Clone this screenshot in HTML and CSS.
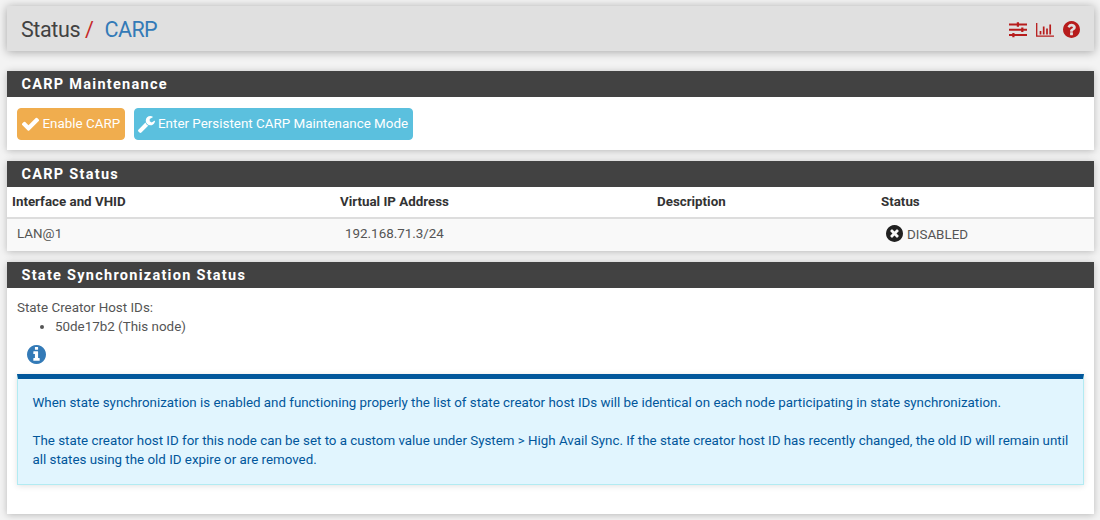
FILE: index.html
```html
<!DOCTYPE html>
<html lang="en">
<head>
<meta charset="utf-8">
<title>Status: CARP</title>
<link rel="stylesheet" href="styles.css">
</head>
<body>
<header class="page-header">
  <h1 class="crumbs"><span class="crumb">Status</span><span class="slash">/</span><a class="crumb-link">CARP</a></h1>
  <nav class="tools">
    <svg class="tool-sliders" viewBox="0 0 18 16"><path d="M0 2.500h18M0 7.800h18M0 13.100h18" stroke="currentColor" stroke-width="2"/><path d="M8.900 .3v4.400M13.300 5.600v4.400M4.400 10.900v4.400" stroke="currentColor" stroke-width="2.200"/></svg>
    <svg class="tool-chart" viewBox="0 0 18 14"><path d="M.7 0v13.100h17.300" fill="none" stroke="currentColor" stroke-width="1.300"/><path d="M4.500 11.500V8M7.700 11.500V3.500M11 11.500V5.500M14.200 11.500V1.500" stroke="currentColor" stroke-width="1.700"/></svg>
    <svg class="tool-help" viewBox="128 128 1536 1536"><path fill="currentColor" fill-rule="evenodd" d="M1024 1376v-192q0-14-9-23t-23-9h-192q-14 0-23 9t-9 23v192q0 14 9 23t23 9h192q14 0 23-9t9-23zm256-672q0-88-55.500-163t-138.500-116-170-41q-243 0-371 213-15 24 8 42l132 100q7 6 19 6 16 0 25-12 53-68 86-92 34-24 86-24 48 0 85.500 26t37.500 59q0 38-20 61t-68 45q-63 28-115.500 86.500t-52.500 125.500v36q0 14 9 23t23 9h192q14 0 23-9t9-23q0-19 21.500-49.500t54.500-49.500q32-18 49-28.500t46-35 44.500-48 28-60.500 12.500-81zm384 192q0 209-103 385.500t-279.500 279.500-385.500 103-385.500-103-279.500-279.500-103-385.500 103-385.500 279.500-279.500 385.500-103 385.500 103 279.500 279.500 103 385.500z"/></svg>
  </nav>
</header>

<section class="panel maintenance">
  <h2 class="panel-heading">CARP Maintenance</h2>
  <div class="actions">
    <button class="btn btn-warning"><svg class="btn-icon" viewBox="128 250 1536 1400"><path fill="currentColor" d="M1671 566q0 40-28 68l-724 724-136 136q-28 28-68 28t-68-28l-136-136-362-362q-28-28-28-68t28-68l136-136q28-28 68-28t68 28l294 295 656-657q28-28 68-28t68 28l136 136q28 28 28 68z"/></svg><span>Enable CARP</span></button>
    <button class="btn btn-info"><svg class="btn-icon" viewBox="85 128 1641 1643"><path fill="currentColor" d="M1092 1052l-682 682q-37 37-90 37-52 0-91-37l-106-108q-38-36-38-90 0-53 38-91l681-681q39 98 114.500 173.500t173.500 114.500zm634-435q0 39-23 106-47 134-164.500 217.500t-258.500 83.500q-185 0-316.500-131.500t-131.500-316.500 131.500-316.500 316.500-131.500q58 0 121.500 16.500t107.500 46.500q16 11 16 28t-16 28l-293 169v224l193 107q5-3 79-48.500t135.500-81 70.500-35.500q15 0 23.500 10t8.500 25z"/></svg><span>Enter Persistent CARP Maintenance Mode</span></button>
  </div>
</section>

<section class="panel status">
  <h2 class="panel-heading">CARP Status</h2>
  <table class="carp-table">
    <thead><tr><th class="col-if">Interface and VHID</th><th class="col-ip">Virtual IP Address</th><th class="col-desc">Description</th><th>Status</th></tr></thead>
    <tbody><tr><td>LAN@1</td><td>192.168.71.3/24</td><td></td><td><div class="state"><svg class="state-icon" viewBox="128 128 1536 1536"><path fill="currentColor" fill-rule="evenodd" d="M1277 1122q0-26-19-45l-181-181 181-181q19-19 19-45 0-27-19-46l-90-90q-19-19-46-19-26 0-45 19l-181 181-181-181q-19-19-45-19-27 0-46 19l-90 90q-19 19-19 46 0 26 19 45l181 181-181 181q-19 19-19 45 0 27 19 46l90 90q19 19 46 19 26 0 45-19l181-181 181 181q19 19 45 19 27 0 46-19l90-90q19-19 19-46zm387-226q0 209-103 385.500t-279.500 279.500-385.500 103-385.500-103-279.500-279.500-103-385.500 103-385.500 279.500-279.500 385.500-103 385.500 103 279.500 279.500 103 385.500z"/></svg><span class="state-text">DISABLED</span></div></td></tr></tbody>
  </table>
</section>

<section class="panel sync">
  <h2 class="panel-heading">State Synchronization Status</h2>
  <div class="sync-body">
    <div class="ids-label">State Creator Host IDs:</div>
    <ul class="ids"><li>50de17b2 (This node)</li></ul>
    <svg class="info-icon" viewBox="128 128 1536 1536"><path fill="currentColor" fill-rule="evenodd" d="M1152 1376v-160q0-14-9-23t-23-9h-96v-512q0-14-9-23t-23-9h-320q-14 0-23 9t-9 23v160q0 14 9 23t23 9h96v320h-96q-14 0-23 9t-9 23v160q0 14 9 23t23 9h448q14 0 23-9t9-23zm-128-896v-160q0-14-9-23t-23-9h-192q-14 0-23 9t-9 23v160q0 14 9 23t23 9h192q14 0 23-9t9-23zm640 416q0 209-103 385.500t-279.500 279.500-385.500 103-385.500-103-279.500-279.500-103-385.500 103-385.500 279.500-279.500 385.500-103 385.500 103 279.500 279.500 103 385.500z"/></svg>
    <div class="note">
      <p class="note-first">When state synchronization is enabled and functioning properly the list of state creator host IDs will be identical on each node participating in state synchronization.</p>
      <p class="note-second">The state creator host ID for this node can be set to a custom value under System &gt; High Avail Sync. If the state creator host ID has recently changed, the old ID will remain until<br>all states using the old ID expire or are removed.</p>
    </div>
  </div>
</section>
</body>
</html>
```
FILE: styles.css
```css
* { box-sizing: border-box; }
html { height: 520px; overflow: hidden; }
body { margin: 0; height: 520px; padding: 6px 6px 0 7px; overflow: hidden; background: #f3f3f3; color: #555; font: 13.400px/19px Roboto, sans-serif; }
h1, h2, p, ul { margin: 0; padding: 0; font-weight: 400; }
svg { display: block; flex: none; }

.page-header { display: flex; align-items: center; justify-content: space-between; height: 45px; padding: 0 14px; background: #e0e0e0; box-shadow: 0 1px 9px rgba(0,0,0,.32); }
.crumbs { display: flex; padding-top: 2px; font-size: 21.500px; line-height: 30px; letter-spacing: -.4px; color: #424242; }
.slash { margin-left: 5px; color: #c62828; }
.crumb-link { margin-left: 11px; color: #337ab7; letter-spacing: -.6px; }
.tools { display: flex; align-items: center; color: #b71c1c; padding-top: 2px; }
.tool-sliders { width: 18px; height: 16px; }
.tool-chart { width: 18px; height: 14px; margin-left: 9px; }
.tool-help { width: 17px; height: 17px; margin-left: 9px; }

.panel { background: #fff; box-shadow: 0 1px 7px rgba(0,0,0,.24); }
.maintenance { height: 79px; margin-top: 20px; }
.status { height: 90px; margin-top: 11px; }
.sync { height: 252px; margin-top: 11px; }
.panel-heading { height: 26px; padding: 1px 0 0 14.500px; background: #424242; color: #fff; font-size: 14.500px; line-height: 26px; font-weight: 700; letter-spacing: 1.270px; }

.actions { display: flex; gap: 8.500px; padding: 11px 10px; }
.btn { display: flex; align-items: center; gap: 3.500px; height: 32px; padding: 0 4px; border: 1px solid; border-radius: 4px; color: #fff; font: 13.400px/30px Roboto, sans-serif; white-space: nowrap; }
.btn-warning { width: 108px; background: #f0ad4e; border-color: #f0ad4e; }
.btn-info { width: 279.500px; padding-left: 3px; background: #5bc0de; border-color: #5bc0de; }
.btn-icon { width: 17px; height: 17px; }

.carp-table { width: 100%; border-collapse: collapse; table-layout: fixed; }
.carp-table th { height: 31px; padding: 0 5px 2px; border-bottom: 2px solid #ddd; text-align: left; color: #333; font-weight: 700; font-size: 13.350px; }
.carp-table td { height: 33px; padding: 0 10px 4px; background: #f9f9f9; }
.col-if { width: 328px; }
.col-ip { width: 317px; }
.col-desc { width: 224px; }
.state { display: flex; align-items: center; gap: 4px; }
.state-icon { width: 17px; height: 17px; color: #212121; }
.state-text { padding-top: 2px; }

.sync-body { padding: 10px 10px 0; }
.ids { padding-left: 38px; }
.info-icon { width: 19px; height: 19px; margin: 9px 0 10px 9.500px; color: #337ab7; }
.note { height: 111px; padding: 14px 14.500px 0; background: #e1f5fe; border: 1px solid #b2ebf2; border-top: 5px solid #01579b; box-shadow: 0 1px 6px rgba(0,0,0,.12); color: #01579b; font-size: 13.350px; white-space: nowrap; }
.note-second { margin-top: 19px; }
```
